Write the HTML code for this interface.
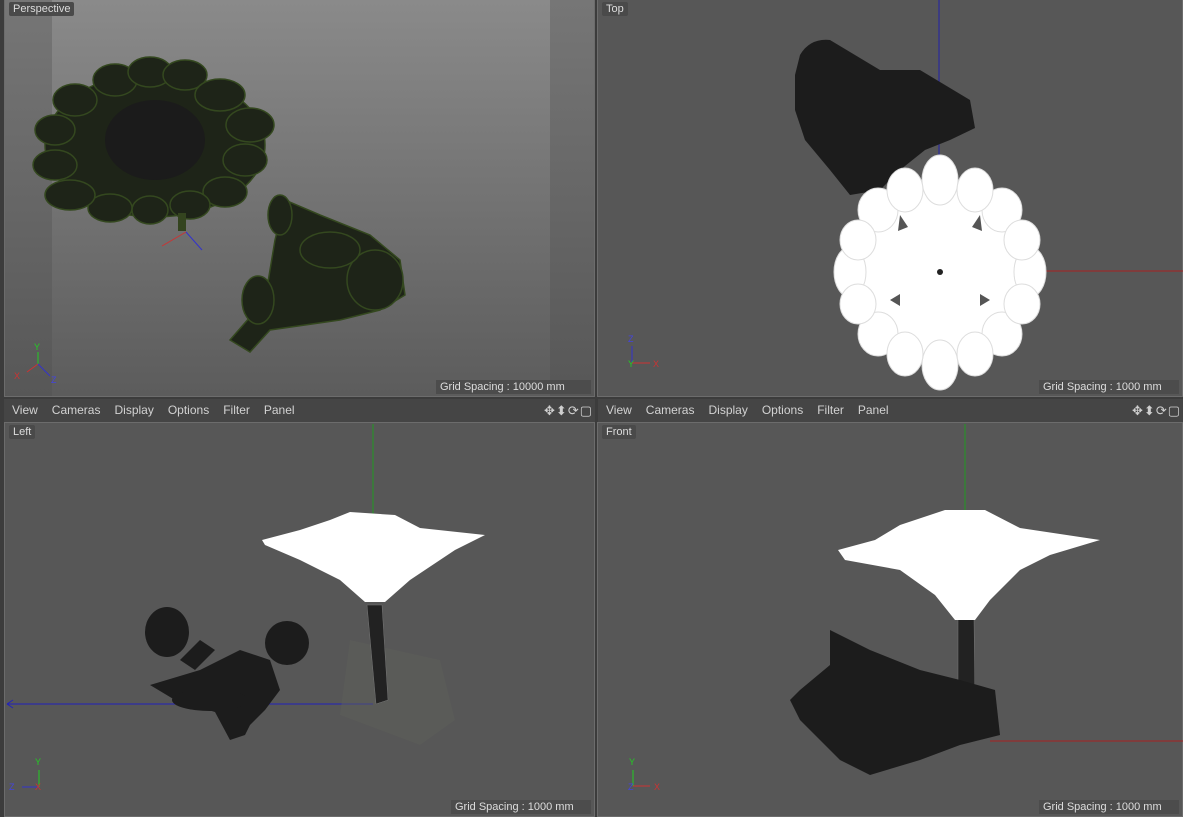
<!DOCTYPE html>
<html><head><meta charset="utf-8"><style>
*{margin:0;padding:0;box-sizing:border-box}
body{width:1183px;height:817px;background:#3c3c3c;position:relative;overflow:hidden;font-family:"Liberation Sans",sans-serif}
.vp{position:absolute;background:#575757;border:1px solid #6c6c6c;overflow:hidden}
.lbl{position:absolute;left:4px;top:2px;background:#4a4a4a;color:#ddd;font-size:11px;padding:1px 4px;border-radius:2px}
.grid{position:absolute;right:3px;bottom:2px;background:#4c4c4c;color:#ddd;font-size:11px;padding:1px 5px 1px 4px;width:155px}
.menu{position:absolute;top:399px;height:23px;background:#454545;color:#d2d2d2;font-size:12px;line-height:23px}
.menu span{margin-left:8px;margin-right:6px}
.icons{position:absolute;right:2px;top:0;color:#cfcfcf;font-size:13px;letter-spacing:1px}
</style></head><body>

<div class="vp" style="left:4px;top:-1px;width:591px;height:398px;background:linear-gradient(#8a8a8a,#5c5c5c)">
 <div style="position:absolute;left:0;top:0;width:47px;height:100%;background:linear-gradient(#767676,#575757)"></div>
 <div style="position:absolute;right:0;top:0;width:44px;height:100%;background:linear-gradient(#767676,#575757)"></div>
 <div class="lbl">Perspective</div>
 <div class="grid">Grid Spacing : 10000 mm</div>
</div>
<div class="vp" style="left:597px;top:-1px;width:586px;height:398px">
 <div class="lbl">Top</div>
 <div class="grid" style="width:140px">Grid Spacing : 1000 mm</div>
</div>
<div class="menu" style="left:4px;width:591px"><span>View</span><span>Cameras</span><span>Display</span><span>Options</span><span>Filter</span><span>Panel</span><div class="icons">✥⬍⟳▢</div></div>
<div class="menu" style="left:598px;width:585px"><span>View</span><span>Cameras</span><span>Display</span><span>Options</span><span>Filter</span><span>Panel</span><div class="icons">✥⬍⟳▢</div></div>
<div class="vp" style="left:4px;top:422px;width:591px;height:395px">
 <div class="lbl">Left</div>
 <div class="grid" style="width:140px">Grid Spacing : 1000 mm</div>
</div>
<div class="vp" style="left:597px;top:422px;width:586px;height:395px">
 <div class="lbl">Front</div>
 <div class="grid" style="width:140px">Grid Spacing : 1000 mm</div>
</div>

<svg width="1183" height="817" style="position:absolute;left:0;top:0" xmlns="http://www.w3.org/2000/svg">
 <!-- perspective flower -->
 <g fill="#1e2418" stroke="#34481f" stroke-width="1.5">
  <ellipse cx="155" cy="145" rx="110" ry="72"/>
  <ellipse cx="115" cy="80" rx="22" ry="16"/><ellipse cx="150" cy="72" rx="22" ry="15"/><ellipse cx="185" cy="75" rx="22" ry="15"/>
  <ellipse cx="220" cy="95" rx="25" ry="16"/><ellipse cx="250" cy="125" rx="24" ry="17"/><ellipse cx="245" cy="160" rx="22" ry="16"/>
  <ellipse cx="225" cy="192" rx="22" ry="15"/><ellipse cx="190" cy="205" rx="20" ry="14"/><ellipse cx="150" cy="210" rx="18" ry="14"/>
  <ellipse cx="110" cy="208" rx="22" ry="14"/><ellipse cx="70" cy="195" rx="25" ry="15"/><ellipse cx="55" cy="165" rx="22" ry="15"/>
  <ellipse cx="55" cy="130" rx="20" ry="15"/><ellipse cx="75" cy="100" rx="22" ry="16"/>
 </g>
 <ellipse cx="155" cy="140" rx="50" ry="40" fill="#1b1b1b"/>
 <rect x="178" y="213" width="8" height="18" fill="#34441f"/>
 <line x1="186" y1="232" x2="162" y2="246" stroke="#c33" stroke-width="1"/>
 <line x1="186" y1="232" x2="202" y2="250" stroke="#33c" stroke-width="1"/>
 <!-- spinach -->
 <g fill="#1e2418" stroke="#34481f" stroke-width="1.5">
  <path d="M230 340 L265 300 L275 240 L285 200 L320 215 L370 235 L400 260 L405 295 L380 310 L340 320 L270 330 L250 352 Z"/>
  <ellipse cx="280" cy="215" rx="12" ry="20"/>
  <ellipse cx="375" cy="280" rx="28" ry="30"/>
  <ellipse cx="258" cy="300" rx="16" ry="24"/>
  <ellipse cx="330" cy="250" rx="30" ry="18"/>
 </g>
 <!-- axes persp -->
 <g font-size="9"><line x1="38" y1="364" x2="38" y2="352" stroke="#2c2"/><text x="34" y="350" fill="#2c2">Y</text>
 <line x1="38" y1="364" x2="27" y2="372" stroke="#c33"/><text x="14" y="379" fill="#c33">X</text>
 <line x1="38" y1="364" x2="50" y2="376" stroke="#33c"/><text x="51" y="383" fill="#44d">Z</text></g>

 <!-- top view -->
 <line x1="939" y1="0" x2="939" y2="160" stroke="#2222aa"/>
 <line x1="1000" y1="271" x2="1183" y2="271" stroke="#aa2222"/>
 <path d="M800 55 Q810 38 830 40 L880 70 L920 70 L970 100 L975 128 L950 140 L925 150 L900 170 L880 190 L850 195 L830 170 L805 140 L795 110 L795 75 Z" fill="#1c1c1c"/>
 <g fill="#fff" stroke="#ddd">
  <circle cx="940" cy="272" r="90"/>
  <ellipse cx="940" cy="180" rx="18" ry="25"/><ellipse cx="940" cy="365" rx="18" ry="25"/>
  <ellipse cx="850" cy="272" rx="16" ry="25"/><ellipse cx="1030" cy="272" rx="16" ry="25"/>
  <ellipse cx="878" cy="210" rx="20" ry="22"/><ellipse cx="1002" cy="210" rx="20" ry="22"/>
  <ellipse cx="878" cy="334" rx="20" ry="22"/><ellipse cx="1002" cy="334" rx="20" ry="22"/>
  <ellipse cx="905" cy="190" rx="18" ry="22"/><ellipse cx="975" cy="190" rx="18" ry="22"/>
  <ellipse cx="905" cy="354" rx="18" ry="22"/><ellipse cx="975" cy="354" rx="18" ry="22"/>
  <ellipse cx="858" cy="240" rx="18" ry="20"/><ellipse cx="1022" cy="240" rx="18" ry="20"/>
  <ellipse cx="858" cy="304" rx="18" ry="20"/><ellipse cx="1022" cy="304" rx="18" ry="20"/>
 </g>
 <g fill="#555"><path d="M900 215 l8 12 l-10 4 Z"/><path d="M980 215 l-8 12 l10 4 Z"/><path d="M890 300 l10 -6 l0 12 Z"/><path d="M990 300 l-10 -6 l0 12 Z"/></g>
 <circle cx="940" cy="272" r="3" fill="#222"/>
 <g font-size="9"><line x1="632" y1="346" x2="632" y2="362" stroke="#33c"/><text x="628" y="342" fill="#44d">Z</text>
 <line x1="632" y1="363" x2="650" y2="363" stroke="#c33"/><text x="653" y="367" fill="#c33">X</text><text x="628" y="367" fill="#2c2">Y</text></g>

 <!-- left view -->
 <line x1="373" y1="424" x2="373" y2="520" stroke="#229922"/>
 <line x1="7" y1="704" x2="373" y2="704" stroke="#2222bb"/>
 <path d="M7 704 l6 -4 M7 704 l6 4" stroke="#2222bb"/>
 <path d="M350 640 L440 660 L455 720 L420 745 L340 715 Z" fill="#5e5f5a" opacity=".5"/>
 <path d="M367 605 L382 605 L388 700 L376 704 L372 660 Z" fill="#222" stroke="#777" stroke-width=".5"/>
 <path d="M262 540 L300 530 L330 520 L350 512 L395 515 L420 528 L485 535 L455 550 L440 560 L410 580 L385 602 L365 602 L340 580 L300 560 L265 545 Z" fill="#fff"/>
 <g fill="#1c1c1c">
  <ellipse cx="167" cy="632" rx="22" ry="25"/><ellipse cx="287" cy="643" rx="22" ry="22"/>
  <path d="M150 685 L200 670 L240 650 L270 660 L280 690 L265 710 L250 725 L245 735 L230 740 L215 712 L175 700 Z"/>
  <ellipse cx="210" cy="700" rx="38" ry="11"/>
  <path d="M180 660 L200 640 L215 650 L195 670 Z"/>
 </g>
 <g font-size="9"><line x1="39" y1="770" x2="39" y2="787" stroke="#2c2"/><text x="35" y="765" fill="#2c2">Y</text>
 <line x1="22" y1="787" x2="39" y2="787" stroke="#33c"/><text x="9" y="790" fill="#44d">Z</text><text x="35" y="790" fill="#c33">X</text></g>

 <!-- front view -->
 <line x1="965" y1="424" x2="965" y2="515" stroke="#229922"/>
 <line x1="990" y1="741" x2="1183" y2="741" stroke="#aa2222"/>
 <path d="M958 618 L974 618 L975 700 L958 700 Z" fill="#222" stroke="#777" stroke-width=".5"/>
 <path d="M838 550 L875 540 L900 525 L945 510 L985 510 L1020 528 L1100 540 L1050 555 L1020 570 L990 600 L975 620 L955 620 L935 595 L900 570 L845 560 Z" fill="#fff"/>
 <path d="M800 690 L830 665 L830 630 L870 650 L920 670 L960 680 L995 690 L1000 735 L960 745 L920 760 L870 775 L840 760 L800 720 L790 700 Z" fill="#1c1c1c"/>
 <g font-size="9"><line x1="633" y1="770" x2="633" y2="786" stroke="#2c2"/><text x="629" y="765" fill="#2c2">Y</text>
 <line x1="633" y1="786" x2="650" y2="786" stroke="#c33"/><text x="654" y="790" fill="#c33">X</text><text x="628" y="790" fill="#44d">Z</text></g>
</svg>
</body></html>
